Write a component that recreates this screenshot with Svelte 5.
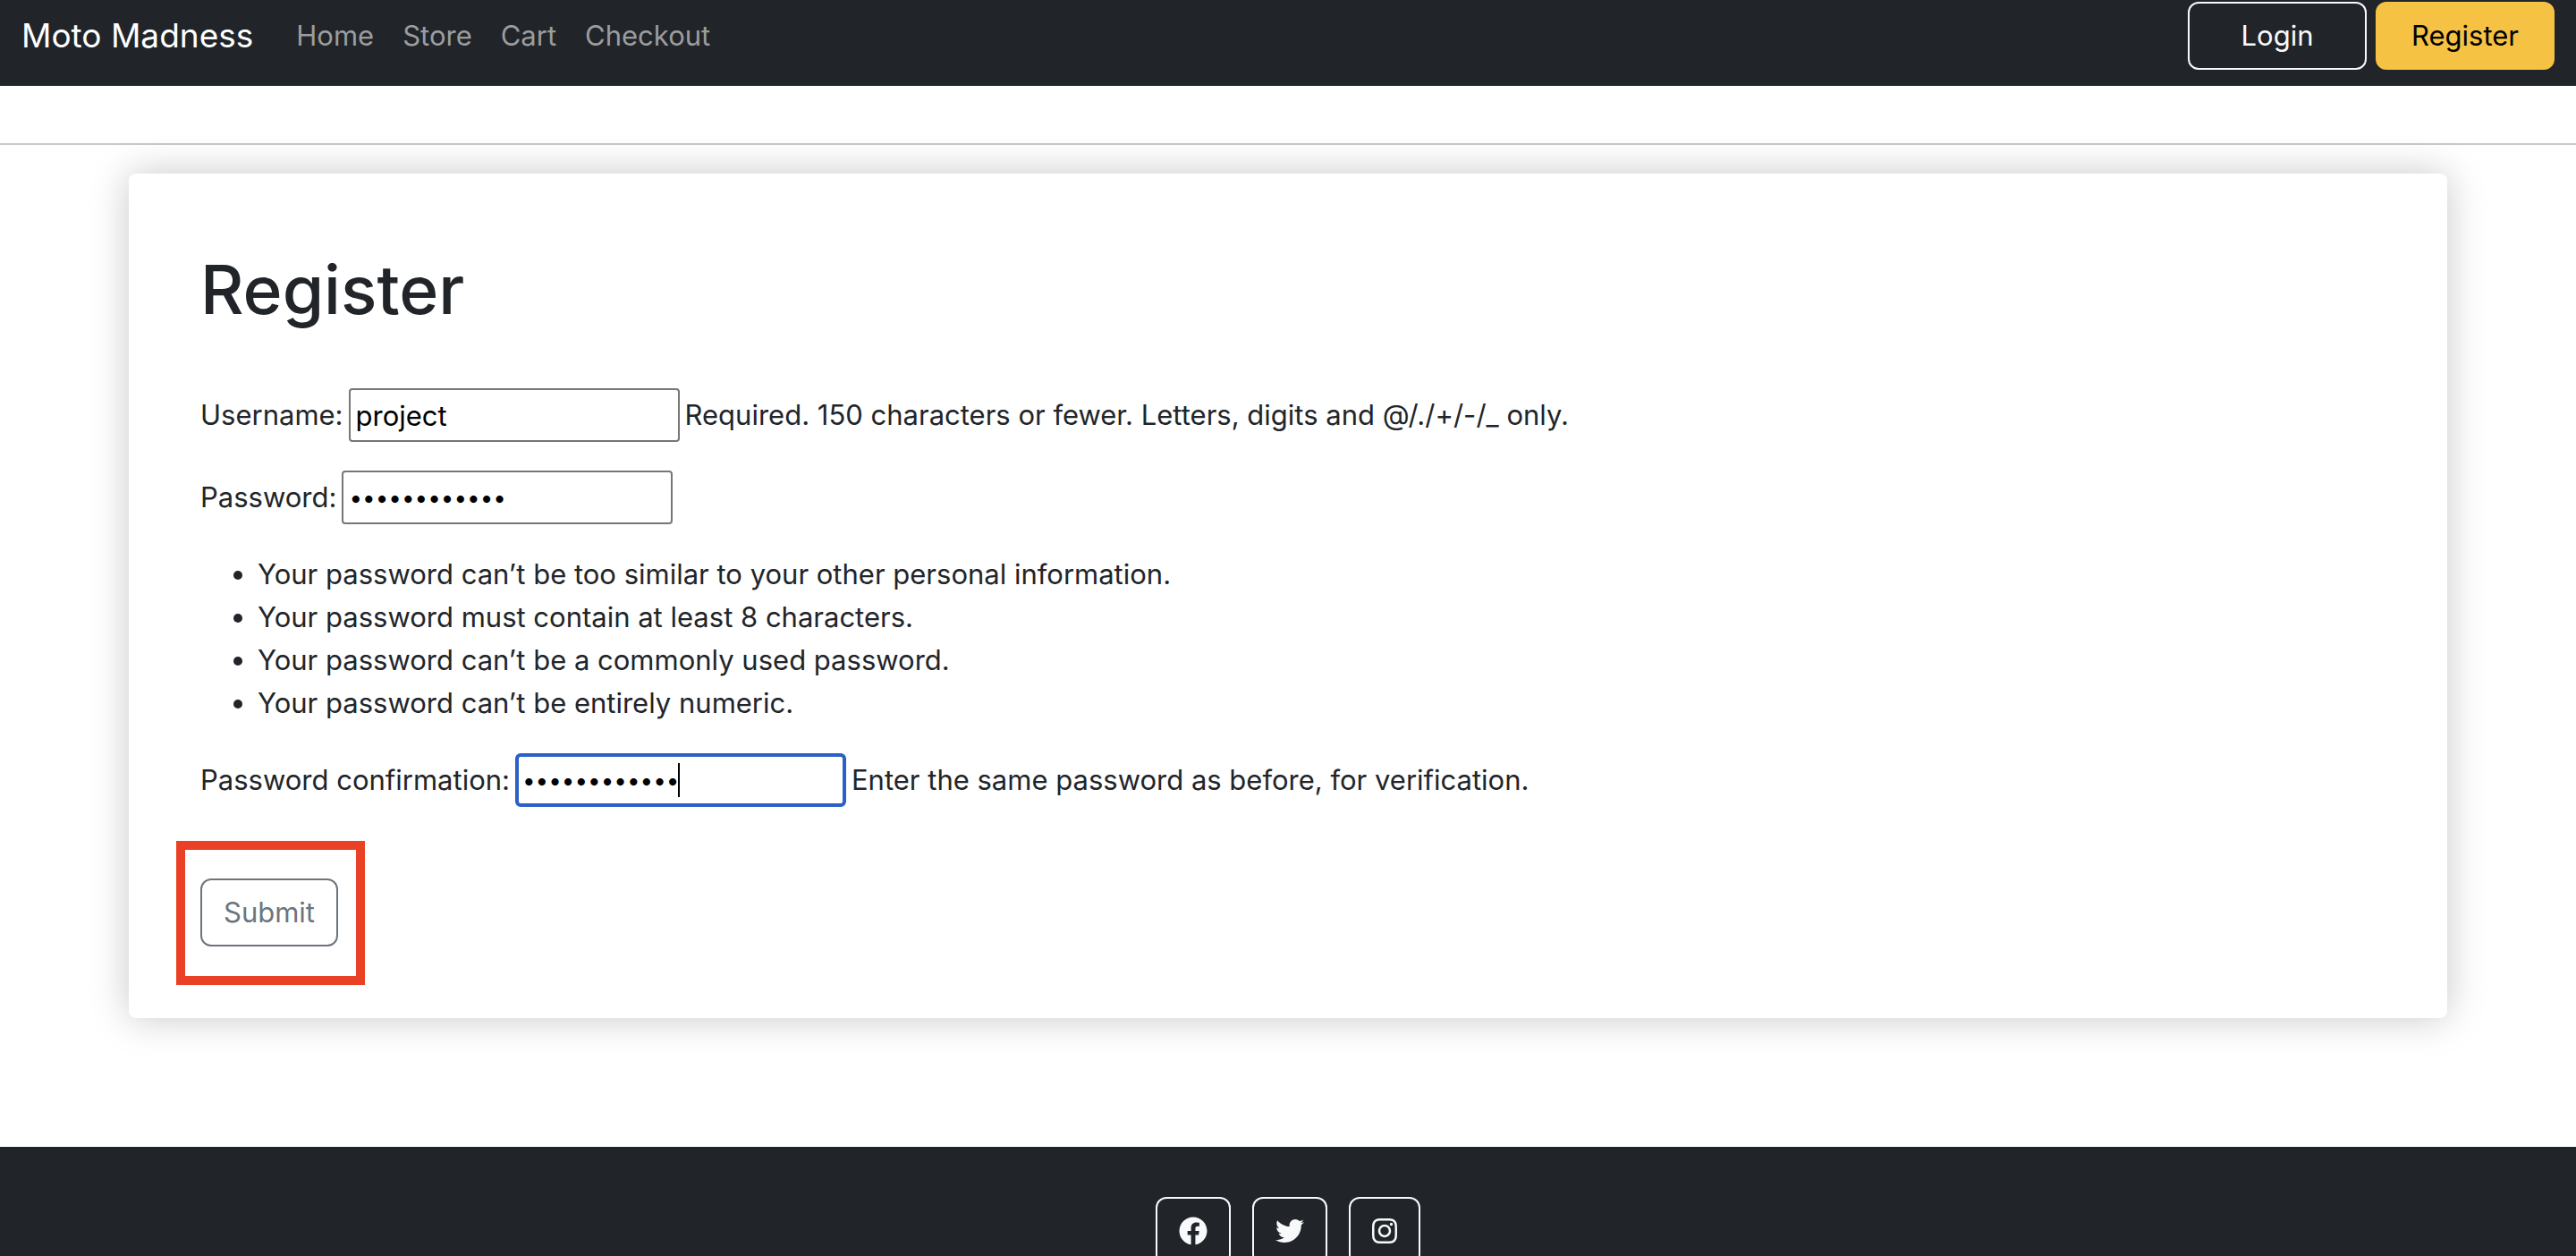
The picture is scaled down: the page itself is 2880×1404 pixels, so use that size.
<script>
  const links = ['Home', 'Store', 'Cart', 'Checkout'];

  const rules = [
    'Your password can’t be too similar to your other personal information.',
    'Your password must contain at least 8 characters.',
    'Your password can’t be a commonly used password.',
    'Your password can’t be entirely numeric.'
  ];

  const socials = [
    {
      name: 'Facebook',
      box: '0 0 512 512',
      wide: true,
      path: 'M504 256C504 119 393 8 256 8S8 119 8 256c0 123.78 90.69 226.38 209.25 245V327.69h-63V256h63v-54.64c0-62.15 37-96.48 93.67-96.48 27.14 0 55.52 4.84 55.52 4.84v61h-31.28c-30.8 0-40.41 19.12-40.41 38.73V256h68.78l-11 71.69h-57.78V501C413.31 482.38 504 379.78 504 256z'
    },
    {
      name: 'Twitter',
      box: '0 0 512 512',
      wide: true,
      path: 'M459.37 151.716c.325 4.548.325 9.097.325 13.645 0 138.72-105.583 298.558-298.558 298.558-59.452 0-114.68-17.219-161.137-47.106 8.447.974 16.568 1.299 25.34 1.299 49.055 0 94.213-16.568 130.274-44.832-46.132-.975-84.792-31.188-98.112-72.772 6.498.974 12.995 1.624 19.818 1.624 9.421 0 18.843-1.3 27.614-3.573-48.081-9.747-84.143-51.98-84.143-102.985v-1.299c13.969 7.797 30.214 12.67 47.431 13.319-28.264-18.843-46.781-51.005-46.781-87.391 0-19.492 5.197-37.36 14.294-52.954 51.655 63.675 129.3 105.258 216.365 109.807-1.624-7.797-2.599-15.918-2.599-24.04 0-57.828 46.782-104.934 104.934-104.934 30.213 0 57.502 12.67 76.67 33.137 23.715-4.548 46.456-13.32 66.599-25.34-7.798 24.366-24.366 44.833-46.132 57.827 21.117-2.273 41.584-8.122 60.426-16.243-14.292 20.791-32.161 39.308-52.628 54.253z'
    },
    {
      name: 'Instagram',
      box: '0 0 448 512',
      wide: false,
      path: 'M224.1 141c-63.6 0-114.9 51.3-114.9 114.9s51.3 114.9 114.9 114.9S339 319.5 339 255.9 287.7 141 224.1 141zm0 189.6c-41.1 0-74.7-33.5-74.7-74.7s33.5-74.7 74.7-74.7 74.7 33.5 74.7 74.7-33.6 74.7-74.7 74.7zm146.4-194.3c0 14.9-12 26.8-26.8 26.8-14.9 0-26.8-12-26.8-26.8s12-26.8 26.8-26.8 26.8 12 26.8 26.8zm76.1 27.2c-1.7-35.9-9.9-67.7-36.2-93.9-26.2-26.2-58-34.4-93.9-36.2-37-2.1-147.9-2.1-184.9 0-35.8 1.7-67.6 9.9-93.9 36.1s-34.4 58-36.2 93.9c-2.1 37-2.1 147.9 0 184.9 1.7 35.9 9.9 67.7 36.2 93.9s58 34.4 93.9 36.2c37 2.1 147.9 2.1 184.9 0 35.9-1.7 67.7-9.9 93.9-36.2 26.2-26.2 34.4-58 36.2-93.9 2.1-37 2.1-147.8 0-184.8zM398.8 388c-7.8 19.6-22.9 34.7-42.6 42.6-29.5 11.7-99.5 9-132.1 9s-102.7 2.6-132.1-9c-19.6-7.8-34.7-22.9-42.6-42.6-11.7-29.5-9-99.5-9-132.1s-2.6-102.7 9-132.1c7.8-19.6 22.9-34.7 42.6-42.6 29.5-11.7 99.5-9 132.1-9s102.7-2.6 132.1 9c19.6 7.8 34.7 22.9 42.6 42.6 11.7 29.5 9 99.5 9 132.1s2.7 102.7-9 132.1z'
    }
  ];

  let username = $state('project');
  let password = $state('motorbike123');
  let confirmation = $state('motorbike123');
</script>

<div class="page">
  <header class="navbar">
    <a class="brand" href="#home">Moto Madness</a>
    <nav class="links" aria-label="Main">
      {#each links as link}
        <a href={'#' + link.toLowerCase()}>{link}</a>
      {/each}
    </nav>
    <div class="account">
      <button class="btn login" type="button">Login</button>
      <button class="btn register" type="button">Register</button>
    </div>
  </header>

  <hr />

  <main class="card">
    <h1>Register</h1>
    <form onsubmit={(event) => event.preventDefault()}>
      <div class="row">
        <label for="username">Username:</label>
        <input id="username" type="text" bind:value={username} />
        <span>Required. 150 characters or fewer. Letters, digits and @/./+/-/_ only.</span>
      </div>
      <div class="row">
        <label for="password">Password:</label>
        <input id="password" type="password" bind:value={password} />
      </div>
      <ul>
        {#each rules as rule}
          <li>{rule}</li>
        {/each}
      </ul>
      <div class="row">
        <label for="confirmation">Password confirmation:</label>
        <span class="active-field">
          <input id="confirmation" type="password" bind:value={confirmation} />
          <span class="caret"></span>
        </span>
        <span>Enter the same password as before, for verification.</span>
      </div>
      <div class="submit-area">
        <button class="btn submit" type="submit">Submit</button>
        <span class="highlight"></span>
      </div>
    </form>
  </main>

  <footer>
    {#each socials as social}
      <a class="social" href={'#' + social.name.toLowerCase()} aria-label={social.name}>
        <svg class:wide={social.wide} viewBox={social.box} aria-hidden="true">
          <path d={social.path} />
        </svg>
      </a>
    {/each}
  </footer>
</div>

<style>
  :global(body) {
    margin: 0;
    background: #fff;
  }

  .page {
    display: flex;
    flex-direction: column;
    height: 100vh;
    overflow: hidden;
    color: #212529;
    font-family: Inter, "Liberation Sans", sans-serif;
    font-size: 31px;
    line-height: 48px;
  }

  .page * {
    box-sizing: border-box;
  }

  a {
    color: inherit;
    text-decoration: none;
  }

  .navbar {
    display: flex;
    flex: none;
    align-items: center;
    height: 96px;
    padding: 0 24px 16px;
    background: #212529;
  }

  .brand {
    margin-right: 32px;
    color: #fff;
    font-size: 37px;
  }

  .links {
    display: flex;
    flex: 1;
    color: #9b9d9e;
  }

  .links a {
    padding: 0 16px;
  }

  .account {
    display: flex;
    gap: 10px;
  }

  .btn {
    height: 76px;
    padding: 0 24px;
    border: 2px solid;
    border-radius: 12px;
    background: none;
    font: inherit;
  }

  .account .btn {
    width: 200px;
  }

  .login {
    border-color: #f8f9fa;
    color: #f8f9fa;
  }

  .register {
    border-color: #f6c244;
    background: #f6c244;
    color: #000;
  }

  hr {
    flex: none;
    width: 100%;
    height: 2px;
    margin: 64px 0 32px;
    border: 0;
    background: #c8c9ca;
  }

  .card {
    flex: none;
    margin: 0 144px 144px;
    padding: 80px;
    border-radius: 8px;
    background: #fff;
    box-shadow: 0 0 44px rgba(0, 0, 0, 0.22);
  }

  h1 {
    margin: 0 0 60px;
    font-size: 75px;
    font-weight: 500;
    line-height: 100px;
  }

  .row {
    display: flex;
    align-items: center;
    gap: 6px;
    margin-bottom: 32px;
  }

  input {
    width: 370px;
    height: 60px;
    padding: 2px 6px;
    border: 2px solid #767676;
    border-radius: 4px;
    background: #fff;
    color: #000;
    font: inherit;
  }

  input[type="password"] {
    font-size: 26px;
  }

  .active-field {
    display: flex;
    position: relative;
  }

  .active-field input {
    border: 4px solid #2a60c8;
    border-radius: 6px;
    padding: 0 4px;
  }

  .caret {
    position: absolute;
    top: 11px;
    left: 182px;
    width: 2px;
    height: 38px;
    background: #000;
  }

  ul {
    margin: 0 0 32px;
    padding-left: 64px;
  }

  .submit-area {
    display: flex;
    position: relative;
    width: max-content;
    padding-top: 48px;
  }

  .submit {
    border-color: #6c757d;
    color: #6c757d;
  }

  .highlight {
    position: absolute;
    inset: 6px -30px -43px -27px;
    border: 10px solid #ea4025;
    pointer-events: none;
  }

  footer {
    display: flex;
    flex: 1 0 122px;
    align-items: flex-start;
    justify-content: center;
    gap: 24px;
    padding-top: 56px;
    background: #212529;
  }

  .social {
    display: flex;
    align-items: center;
    height: 76px;
    padding: 0 24px;
    border: 2px solid #f8f9fa;
    border-radius: 12px;
    color: #f8f9fa;
  }

  svg {
    width: 28px;
    height: 32px;
    fill: currentColor;
  }

  svg.wide {
    width: 32px;
  }
</style>
